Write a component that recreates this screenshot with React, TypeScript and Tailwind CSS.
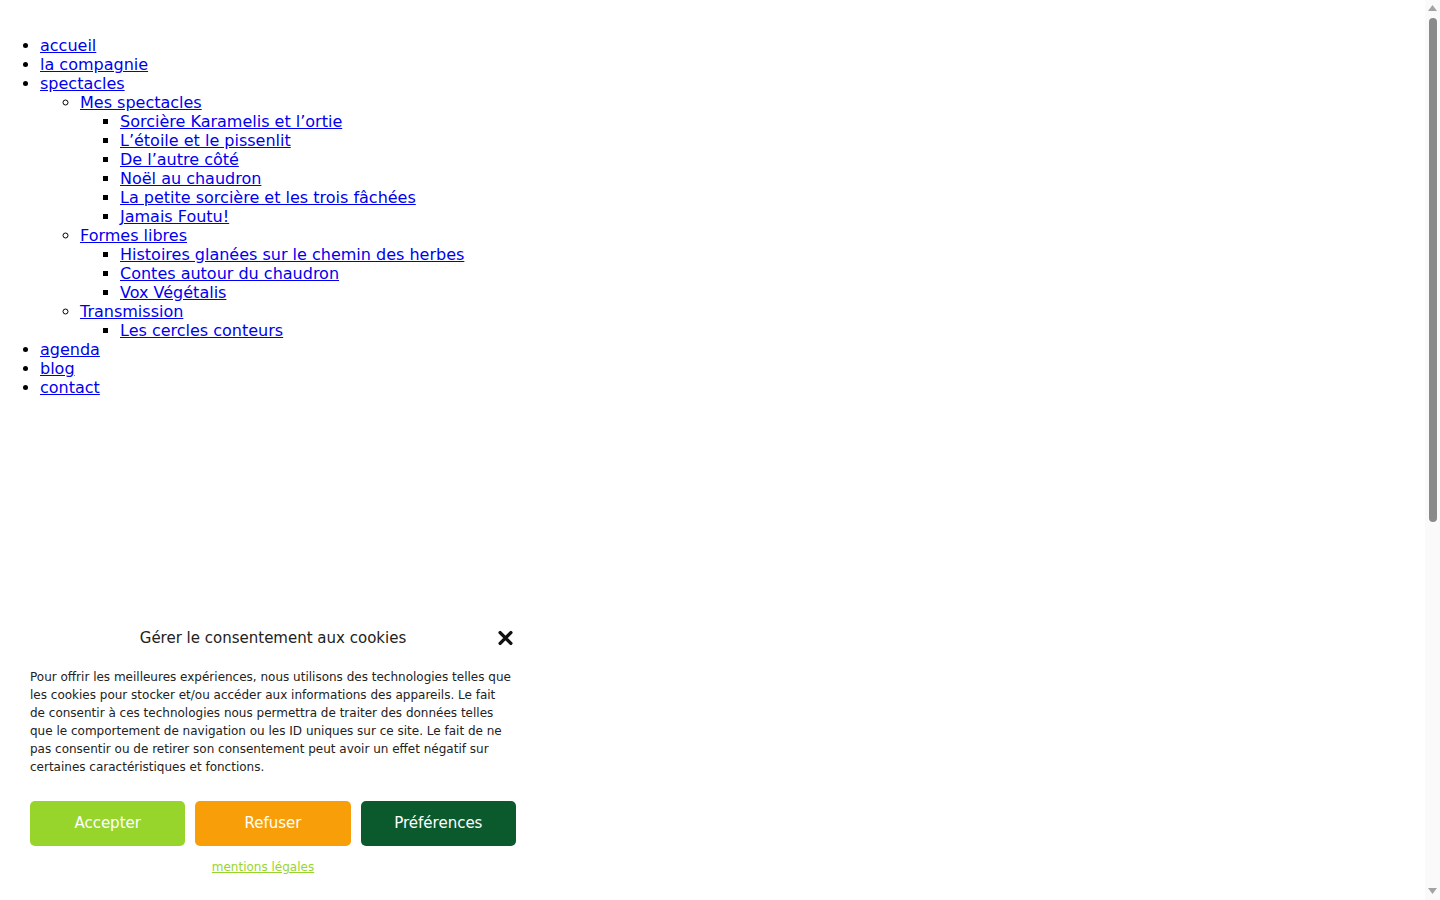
import React from 'react';

type Item = { label: string; children?: Item[] };

const MENU: Item[] = [
  { label: 'accueil' },
  { label: 'la compagnie' },
  {
    label: 'spectacles',
    children: [
      {
        label: 'Mes spectacles',
        children: [
          { label: 'Sorcière Karamelis et l’ortie' },
          { label: 'L’étoile et le pissenlit' },
          { label: 'De l’autre côté' },
          { label: 'Noël au chaudron' },
          { label: 'La petite sorcière et les trois fâchées' },
          { label: 'Jamais Foutu!' },
        ],
      },
      {
        label: 'Formes libres',
        children: [
          { label: 'Histoires glanées sur le chemin des herbes' },
          { label: 'Contes autour du chaudron' },
          { label: 'Vox Végétalis' },
        ],
      },
      {
        label: 'Transmission',
        children: [{ label: 'Les cercles conteurs' }],
      },
    ],
  },
  { label: 'agenda' },
  { label: 'blog' },
  { label: 'contact' },
];

const listStyles = ['list-disc', 'list-[circle]', 'list-[square]'];

function Menu({ items, depth = 0 }: { items: Item[]; depth?: number }) {
  return (
    <ul className={`${listStyles[depth]} pl-10`}>
      {items.map((item) => (
        <li key={item.label}>
          <a href="#" className="text-[#0000ee] underline">
            {item.label}
          </a>
          {item.children && <Menu items={item.children} depth={depth + 1} />}
        </li>
      ))}
    </ul>
  );
}

export default function App() {
  return (
    <div className="min-h-[1550px] bg-white font-['DejaVu_Sans',sans-serif] text-base leading-[19px] text-black">
      <nav className="pt-9">
        <Menu items={MENU} />
      </nav>

      {/* Cookie banner */}
      <div className="fixed bottom-[12px] left-[10px] w-[526px] bg-white px-5 pt-3 pb-3 text-[#222]">
        <div className="relative flex h-[24px] items-center justify-center">
          <span className="text-[15px] leading-[24px]">Gérer le consentement aux cookies</span>
          <button className="absolute right-[3px] top-1/2 -translate-y-1/2" aria-label="Fermer">
            <svg width="15" height="15" viewBox="0 0 14 14" className="block">
              <path d="M2 2 L12 12 M12 2 L2 12" stroke="#111" strokeWidth="3.2" strokeLinecap="round" />
            </svg>
          </button>
        </div>
        <p className="mt-[18px] pr-1 text-[12px] leading-[18px]">
          Pour offrir les meilleures expériences, nous utilisons des technologies telles que les cookies pour stocker et/ou accéder aux informations des appareils. Le fait de consentir à ces technologies nous permettra de traiter des données telles que le comportement de navigation ou les ID uniques sur ce site. Le fait de ne pas consentir ou de retirer son consentement peut avoir un effet négatif sur certaines caractéristiques et fonctions.
        </p>
        <div className="mt-[25px] grid grid-cols-3 gap-[10px]">
          <button className="h-[45px] rounded-[5px] bg-[#97d52d] text-[15px] text-white">Accepter</button>
          <button className="h-[45px] rounded-[5px] bg-[#f89e08] text-[15px] text-white">Refuser</button>
          <button className="h-[45px] rounded-[5px] bg-[#0b5a2e] text-[15px] text-white">Préférences</button>
        </div>
        <div className="mt-[10px] pr-5 text-center">
          <a href="#" className="text-[12px] leading-[18px] text-[#97d52d] underline">
            mentions légales
          </a>
        </div>
      </div>

      {/* Scrollbar */}
      <div className="fixed right-0 top-0 flex h-full w-[15px] flex-col items-center bg-[#fafafa]">
        <svg width="9" height="6" viewBox="0 0 9 6" className="mt-[5px] shrink-0">
          <path d="M4.5 0 L9 6 L0 6 Z" fill="#a3a3a3" />
        </svg>
        <div className="mt-[7px] h-[504px] w-[8px] rounded-full bg-[#8a8a8a]" />
        <div className="flex-1" />
        <svg width="9" height="6" viewBox="0 0 9 6" className="mb-[6px] shrink-0">
          <path d="M0 0 L9 0 L4.5 6 Z" fill="#a3a3a3" />
        </svg>
      </div>
    </div>
  );
}
